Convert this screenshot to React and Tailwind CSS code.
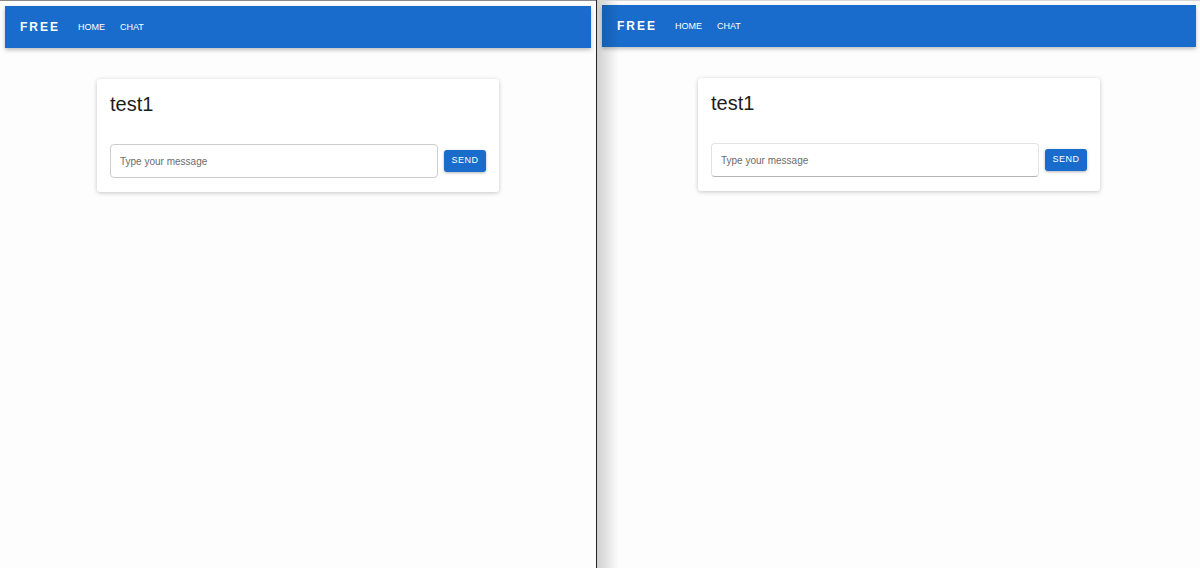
import React from 'react';

function NavBar({ className = '' }) {
  return (
    <div className={`h-[42px] bg-[#196ccb] flex items-center pl-[15px] shadow-[0_2px_4px_rgba(0,0,0,0.25)] ${className}`}>
      <span className="text-white font-bold text-[12px] tracking-[2px] mr-[18px] leading-none">FREE</span>
      <nav className="flex gap-[15px] text-white text-[9px] pt-px">
        <span>HOME</span>
        <span>CHAT</span>
      </nav>
    </div>
  );
}

function ChatCard({ inputBorder }) {
  return (
    <div className="mx-auto w-[402px] bg-white rounded-[3px] shadow-[0_1px_4px_rgba(0,0,0,0.22)] px-[13px] pt-[12px] pb-[14px]">
      <h5 className="text-[20px] leading-[27px] text-[#1c1c1c]">test1</h5>
      <div className="flex items-center gap-[6px] mt-[26px]">
        <div className={`w-[328px] h-[34px] rounded-[4px] border flex items-center pl-[9px] ${inputBorder}`}>
          <span className="text-[10px] text-[#6b6b6b]">Type your message</span>
        </div>
        <button className="w-[42px] h-[22px] rounded-[3px] bg-[#196ccb] text-white text-[9px] font-medium tracking-[0.5px] shadow-[0_1px_3px_rgba(0,0,0,0.3)]">
          SEND
        </button>
      </div>
    </div>
  );
}

export default function App() {
  return (
    <div className="flex w-[1200px] h-[568px] overflow-hidden bg-[#fdfdfd] font-['Liberation_Sans',Arial,sans-serif]">
      {/* left window */}
      <div className="w-[596px] h-full border-t border-[#8a8a8a] px-[5px] pt-[5px]">
        <NavBar />
        <div className="pt-[31px]">
          <ChatCard inputBorder="border-[#cdcdcd]" />
        </div>
      </div>

      <div className="w-px h-full bg-[#262626]" />

      {/* right window */}
      <div className="relative flex-1 h-full border-t border-[#d8d8d8] pl-[5px] pr-[4px] pt-[4px]">
        <NavBar />
        <div className="pt-[31px]">
          <ChatCard inputBorder="border-[#e3e3e3] border-b-[#b5b5b5]" />
        </div>
        <div className="absolute inset-y-0 left-0 w-[22px] pointer-events-none bg-gradient-to-r from-[rgba(0,0,0,0.18)] to-transparent" />
      </div>
    </div>
  );
}
